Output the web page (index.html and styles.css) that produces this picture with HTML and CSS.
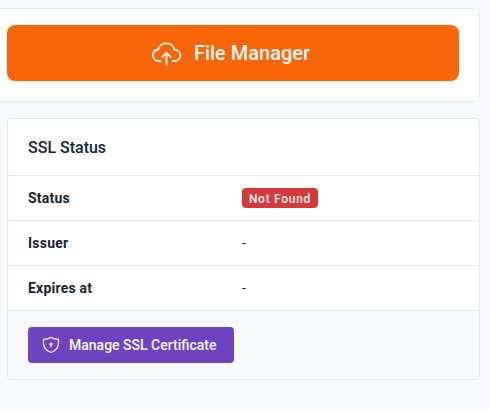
FILE: index.html
```html
<!DOCTYPE html>
<html lang="en">
<head>
<meta charset="utf-8">
<title>SSL Status</title>
<link rel="stylesheet" href="styles.css">
</head>
<body>
<section class="card card-files">
  <a class="btn-files">
    <svg class="icon-cloud" viewBox="0 0 30 26" fill="none" stroke="currentColor" stroke-width="1.800" stroke-linecap="butt" stroke-linejoin="miter"><path d="M9 21H7C3.500 21 1 18.500 1 15.200C1 12.200 3.200 9.900 6.300 9.500C7 6 10.300 3.300 14.300 3.300C18.300 3.300 21.700 6 22.400 9.700C25.900 9.900 28.400 12.200 28.400 15.300C28.400 18.500 26 21 22.400 21H20M14.500 25.500V13M9.800 17.400L14.500 12.700L19.200 17.400"/></svg>
    <span>File Manager</span>
  </a>
</section>
<section class="card card-ssl">
  <h3 class="card-title">SSL Status</h3>
  <div class="row"><strong>Status</strong><span><span class="badge">Not Found</span></span></div>
  <div class="row"><strong>Issuer</strong><span>-</span></div>
  <div class="row"><strong>Expires at</strong><span>-</span></div>
  <footer class="card-footer">
    <a class="btn-ssl">
      <svg class="icon-shield" viewBox="0 0 18 18" fill="none" stroke="currentColor" stroke-width="1.200" stroke-linecap="round" stroke-linejoin="round"><path d="M9 1.300C11 2.800 13.500 3.400 16.400 3.400C17.200 9.500 15 14.500 9 16.500C3 14.500 .8 9.500 1.600 3.400C4.500 3.400 7 2.800 9 1.300Z"/><circle cx="9" cy="8" r="1" fill="currentColor"/><path d="M9 9V11"/></svg>
      <span>Manage SSL Certificate</span>
    </a>
  </footer>
</section>
</body>
</html>
```
FILE: styles.css
```css
* { box-sizing: border-box; }
body { margin: 0; height: 409px; overflow: hidden; padding-top: 8px; background: #f6f8fb; color: #182433; font: 14px/20px Roboto, sans-serif; }
.card { background: #fff; border: 1px solid #e6e8eb; border-radius: 4px; }
.card-files { width: 490px; height: 94px; margin-left: -10px; padding: 16px 20px 0 16px; }
.btn-files { display: flex; align-items: center; justify-content: center; gap: 12px; height: 56px; padding-right: 4px; border-radius: 8px; background: #f76707; color: #f6f8fb; font-size: 20px; font-weight: 500; }
.icon-cloud { width: 30px; height: 26px; }
.card-ssl { width: 473px; height: 262px; margin: 16px 0 0 7px; overflow: hidden; }
.card-title { display: flex; align-items: center; height: 57px; margin: 0; padding: 2px 20px 0; border-bottom: 1px solid #e6e8eb; font-size: 16px; font-weight: 500; }
.row { display: grid; grid-template-columns: 214px 1fr; align-items: center; height: 45px; padding: 0 20px; border-bottom: 1px solid #e6e8eb; }
.row strong { font-weight: 700; letter-spacing: .22px; }
.badge { display: block; width: 76px; height: 20px; border-radius: 4px; background: #d63939; color: #f6f8fb; font-size: 12px; font-weight: 500; letter-spacing: .72px; line-height: 22px; text-align: center; }
.card-footer { height: 69px; padding: 16px 20px; background: #f6f8fb; }
.btn-ssl { display: flex; align-items: center; width: 206px; height: 36px; padding-left: 14px; gap: 9px; border-radius: 4px; background: #6f42c1; color: #f6f8fb; font-weight: 500; }
.icon-shield { width: 18px; height: 18px; }
```
